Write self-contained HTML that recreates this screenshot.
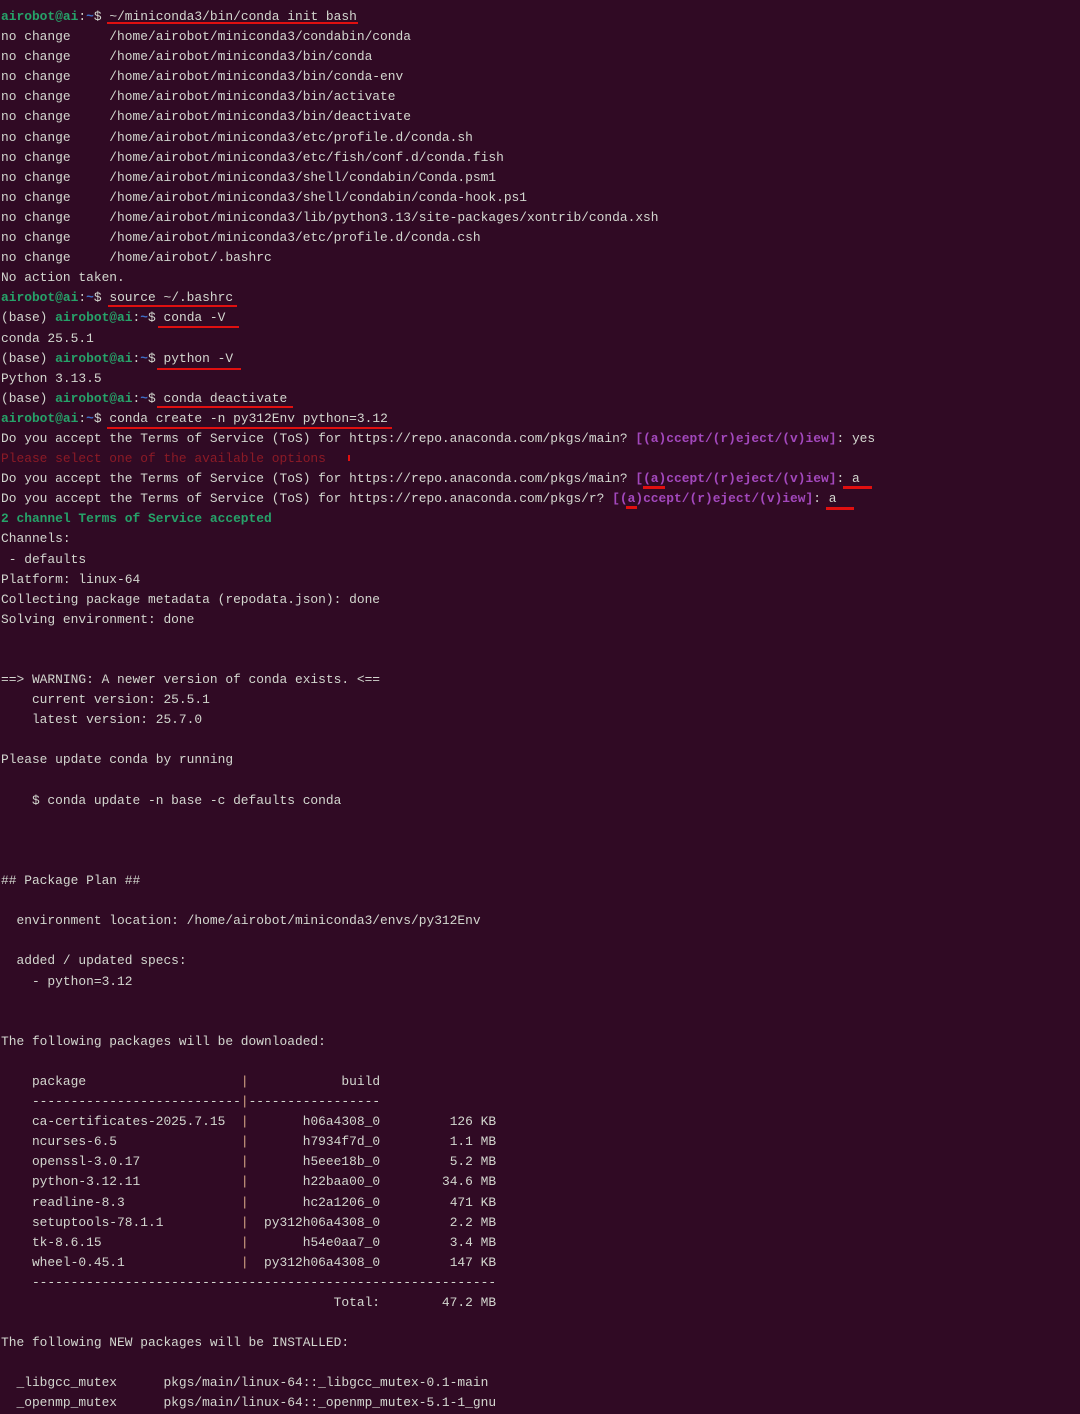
<!DOCTYPE html>
<html><head><meta charset="utf-8"><style>
html,body{margin:0;padding:0;background:#300a24;}
body{width:1080px;height:1411px;overflow:hidden;position:relative;}
pre{margin:0;padding:7px 0 0 1px;font-family:"Liberation Mono","DejaVu Sans Mono",monospace;font-size:12.9px;line-height:20.1px;color:#d3d7cf;white-space:pre;}
.g{color:#26a269;font-weight:bold}
.b{color:#3f6fc6;font-weight:bold}
.p{color:#a348bd;font-weight:bold}
.r{color:#8c1a26}
.o{color:#d8a888}
.u{position:absolute;height:2px;background:#e01010;}
</style></head><body>
<pre><span class="g">airobot@ai</span>:<span class="b">~</span>$ ~/miniconda3/bin/conda init bash
no change     /home/airobot/miniconda3/condabin/conda
no change     /home/airobot/miniconda3/bin/conda
no change     /home/airobot/miniconda3/bin/conda-env
no change     /home/airobot/miniconda3/bin/activate
no change     /home/airobot/miniconda3/bin/deactivate
no change     /home/airobot/miniconda3/etc/profile.d/conda.sh
no change     /home/airobot/miniconda3/etc/fish/conf.d/conda.fish
no change     /home/airobot/miniconda3/shell/condabin/Conda.psm1
no change     /home/airobot/miniconda3/shell/condabin/conda-hook.ps1
no change     /home/airobot/miniconda3/lib/python3.13/site-packages/xontrib/conda.xsh
no change     /home/airobot/miniconda3/etc/profile.d/conda.csh
no change     /home/airobot/.bashrc
No action taken.
<span class="g">airobot@ai</span>:<span class="b">~</span>$ source ~/.bashrc
(base) <span class="g">airobot@ai</span>:<span class="b">~</span>$ conda -V
conda 25.5.1
(base) <span class="g">airobot@ai</span>:<span class="b">~</span>$ python -V
Python 3.13.5
(base) <span class="g">airobot@ai</span>:<span class="b">~</span>$ conda deactivate
<span class="g">airobot@ai</span>:<span class="b">~</span>$ conda create -n py312Env python=3.12
Do you accept the Terms of Service (ToS) for https://repo.anaconda.com/pkgs/main? <span class="p">[(a)ccept/(r)eject/(v)iew]</span>: yes
<span class="r">Please select one of the available options</span>
Do you accept the Terms of Service (ToS) for https://repo.anaconda.com/pkgs/main? <span class="p">[(a)ccept/(r)eject/(v)iew]</span>: a
Do you accept the Terms of Service (ToS) for https://repo.anaconda.com/pkgs/r? <span class="p">[(a)ccept/(r)eject/(v)iew]</span>: a
<span class="g">2 channel Terms of Service accepted</span>
Channels:
 - defaults
Platform: linux-64
Collecting package metadata (repodata.json): done
Solving environment: done


==> WARNING: A newer version of conda exists. <==
    current version: 25.5.1
    latest version: 25.7.0

Please update conda by running

    $ conda update -n base -c defaults conda



## Package Plan ##

  environment location: /home/airobot/miniconda3/envs/py312Env

  added / updated specs:
    - python=3.12


The following packages will be downloaded:

    package                    <span class="o">|</span>            build
    ---------------------------<span class="o">|</span>-----------------
    ca-certificates-2025.7.15  <span class="o">|</span>       h06a4308_0         126 KB
    ncurses-6.5                <span class="o">|</span>       h7934f7d_0         1.1 MB
    openssl-3.0.17             <span class="o">|</span>       h5eee18b_0         5.2 MB
    python-3.12.11             <span class="o">|</span>       h22baa00_0        34.6 MB
    readline-8.3               <span class="o">|</span>       hc2a1206_0         471 KB
    setuptools-78.1.1          <span class="o">|</span>  py312h06a4308_0         2.2 MB
    tk-8.6.15                  <span class="o">|</span>       h54e0aa7_0         3.4 MB
    wheel-0.45.1               <span class="o">|</span>  py312h06a4308_0         147 KB
    ------------------------------------------------------------
                                           Total:        47.2 MB

The following NEW packages will be INSTALLED:

  _libgcc_mutex      pkgs/main/linux-64::_libgcc_mutex-0.1-main
  _openmp_mutex      pkgs/main/linux-64::_openmp_mutex-5.1-1_gnu
</pre>
<div class="u" style="left:107px;top:22px;width:251px"></div>
<div class="u" style="left:108px;top:305px;width:129px"></div>
<div class="u" style="left:158px;top:326px;width:81px"></div>
<div class="u" style="left:157px;top:368px;width:84px"></div>
<div class="u" style="left:157px;top:406px;width:136px"></div>
<div class="u" style="left:107px;top:427px;width:285px"></div>
<div class="u" style="left:348px;top:455px;width:2px;height:6px"></div>
<div class="u" style="left:643px;top:486px;width:22px;height:3px"></div>
<div class="u" style="left:843px;top:486px;width:29px;height:3px"></div>
<div class="u" style="left:626px;top:506px;width:11px;height:3px"></div>
<div class="u" style="left:826px;top:507px;width:28px;height:3px"></div>
</body></html>
